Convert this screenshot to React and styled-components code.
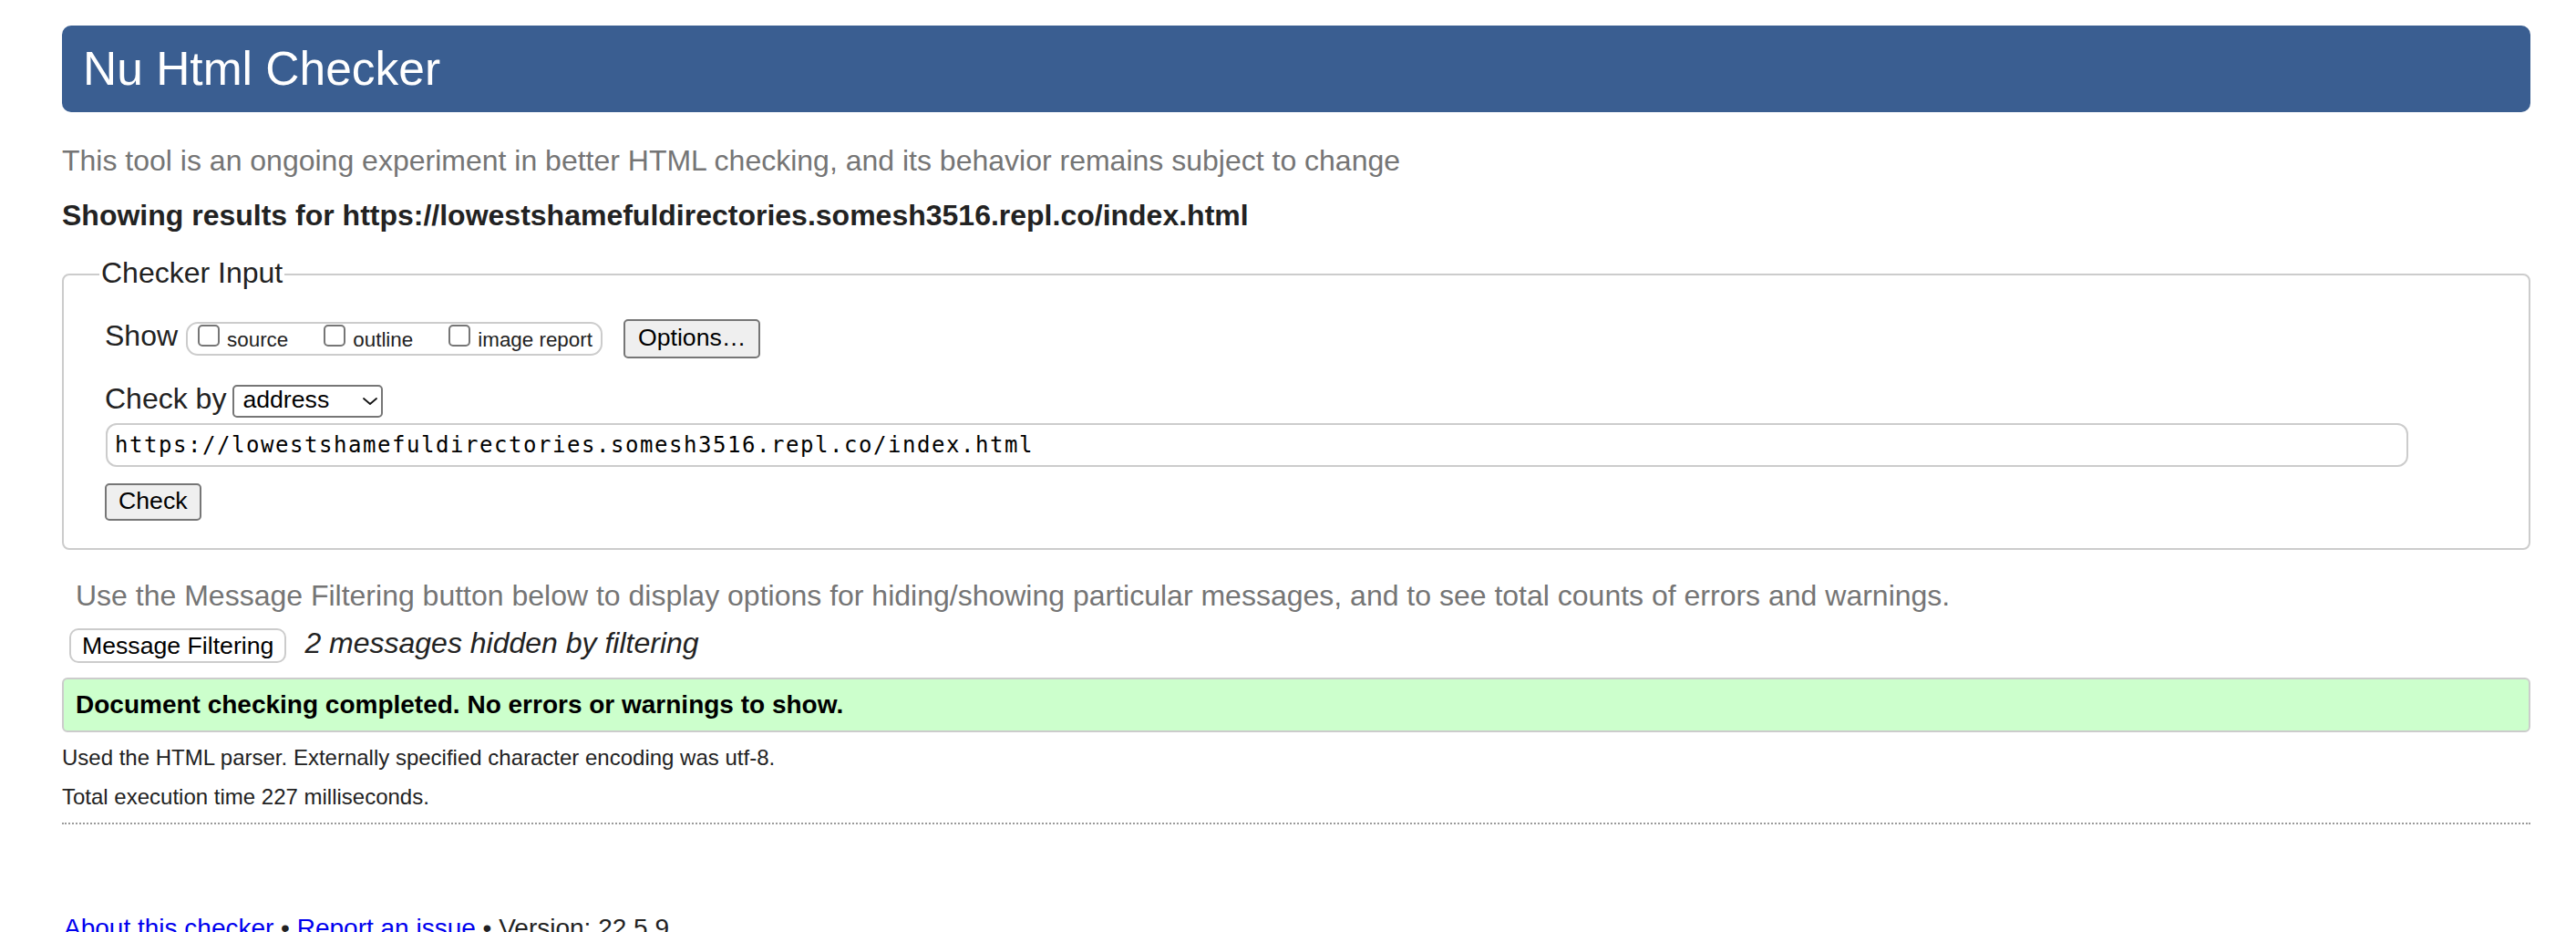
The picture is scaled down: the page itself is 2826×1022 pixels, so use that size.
import React from 'react'
import styled, { createGlobalStyle } from 'styled-components'

const GlobalStyle = createGlobalStyle`
  html, body {
    margin: 0;
    padding: 0;
    background: #fff;
  }
  body {
    font-family: 'Liberation Sans', Arial, sans-serif;
    color: #222;
  }
`

const Page = styled.div`
  padding: 28px 50px 0 68px;
`

const Header = styled.h1`
  margin: 0;
  height: 95px;
  line-height: 95px;
  padding-left: 23px;
  background: #3a5e91;
  color: #fff;
  font-size: 51.5px;
  font-weight: normal;
  border-radius: 10px;
`

const Intro = styled.p`
  margin: 33px 0 0;
  font-size: 32px;
  line-height: 40px;
  color: #757575;
`

const Results = styled.p`
  margin: 20px 0 0;
  font-size: 32px;
  line-height: 40px;
  font-weight: bold;
  color: #222;
`

const Fieldset = styled.fieldset`
  margin: 27px 0 0;
  padding: 31px 20px 30px 45px;
  min-width: 0;
  border: 2px solid #ccc;
  border-radius: 8px;
`

const Legend = styled.legend`
  margin-left: -6px;
  padding: 0 2px 4px;
  font-size: 32px;
  line-height: 32px;
  color: #222;
`

const Row = styled.div`
  display: flex;
  align-items: flex-start;
  margin-top: ${({ $gap }) => $gap || 0}px;
`

const FieldLabel = styled.span`
  font-size: 32px;
  line-height: ${({ $lh }) => $lh}px;
  margin-right: ${({ $space }) => $space}px;
  color: #222;
`

const ChoiceGroup = styled.span`
  display: flex;
  align-items: flex-start;
  box-sizing: border-box;
  height: 37px;
  margin-top: 3px;
  padding: 1px 9px 0 11px;
  border: 2px solid #ccc;
  border-radius: 13px;
`

const Choice = styled.label`
  display: flex;
  align-items: flex-start;
  & + & {
    margin-left: 39px;
  }
`

const Box = styled.span`
  display: block;
  box-sizing: border-box;
  width: 24px;
  height: 24px;
  margin-right: 8px;
  background: #fff;
  border: 2px solid #767676;
  border-radius: 5px;
`

const ChoiceText = styled.span`
  font-size: 22.4px;
  line-height: 34px;
  color: #222;
`

const Button = styled.button`
  display: block;
  margin: 0 0 0 ${({ $left }) => $left || 0}px;
  padding: ${({ $pad }) => $pad || '3px 14px 6px'};
  font-family: 'Liberation Sans', Arial, sans-serif;
  font-size: 26.67px;
  line-height: 30px;
  color: #000;
  background: #efefef;
  border: 2px solid #767676;
  border-radius: 5px;
`

const FilterButton = styled(Button)`
  padding: 2px 12px;
  margin-left: 8px;
  background: #fff;
  border-color: #ccc;
  border-radius: 10px;
`

const Select = styled.span`
  display: flex;
  align-items: center;
  justify-content: space-between;
  box-sizing: border-box;
  width: 165px;
  height: 36px;
  padding: 0 4px 3px 9px;
  border: 2px solid #767676;
  border-radius: 5px;
  font-size: 26.67px;
  color: #000;
`

const Chevron = styled.svg`
  margin-top: 3px;
`

const UrlField = styled.input`
  display: block;
  box-sizing: border-box;
  width: 2526px;
  height: 48px;
  margin: 6px 0 0 1px;
  padding: 0 8px;
  border: 2px solid #ccc;
  border-radius: 12px;
  background: #fff;
  font-family: 'DejaVu Sans Mono', 'Liberation Mono', monospace;
  font-size: 24px;
  letter-spacing: 1.55px;
  color: #000;
  outline: none;
`

const CheckWrap = styled.div`
  margin-top: 18px;
`

const FilterHint = styled.p`
  margin: 30px 0 0;
  padding-left: 15px;
  font-size: 32px;
  line-height: 40px;
  color: #757575;
`

const FilterRow = styled.div`
  display: flex;
  align-items: flex-start;
  margin-top: 16px;
`

const HiddenNote = styled.em`
  margin-left: 20px;
  font-size: 32px;
  line-height: 33px;
  color: #222;
`

const Success = styled.div`
  margin-top: 16px;
  box-sizing: border-box;
  height: 60px;
  padding-left: 13px;
  background: #ccffcc;
  border: 2px solid #ccc;
  border-radius: 6px;
  font-size: 28px;
  line-height: 56px;
  font-weight: bold;
  color: #000;
`

const Detail = styled.p`
  margin: 13px 0 0;
  font-size: 24px;
  line-height: 30px;
  color: #222;
`

const Rule = styled.hr`
  margin: 13px 0 0;
  height: 0;
  border: 0;
  border-top: 2px dotted #9a9a9a;
`

const Footer = styled.p`
  margin: 98px 0 0 2px;
  font-size: 28px;
  line-height: 32px;
  color: #222;
`

const FooterLink = styled.a`
  color: #0000ee;
  text-decoration: none;
`

const choices = ['source', 'outline', 'image report']
const url = 'https://lowestshamefuldirectories.somesh3516.repl.co/index.html'

export default function App () {
  return (
    <Page>
      <GlobalStyle />
      <Header>Nu Html Checker</Header>
      <Intro>This tool is an ongoing experiment in better HTML checking, and its behavior remains subject to change</Intro>
      <Results>Showing results for {url}</Results>

      <Fieldset>
        <Legend>Checker Input</Legend>
        <Row>
          <FieldLabel $lh={36} $space={9}>Show</FieldLabel>
          <ChoiceGroup>
            {choices.map(c => (
              <Choice key={c}>
                <Box />
                <ChoiceText>{c}</ChoiceText>
              </Choice>
            ))}
          </ChoiceGroup>
          <Button $left={23}>Options…</Button>
        </Row>
        <Row $gap={29}>
          <FieldLabel $lh={30} $space={7}>Check by</FieldLabel>
          <Select>
            <span>address</span>
            <Chevron width='16' height='8' viewBox='0 0 16 8'>
              <path d='M1 1 L8 7 L15 1' fill='none' stroke='#111' strokeWidth='1.8' strokeLinecap='round' strokeLinejoin='round' />
            </Chevron>
          </Select>
        </Row>
        <UrlField readOnly value={url} />
        <CheckWrap>
          <Button $pad='2px 13px 5px'>Check</Button>
        </CheckWrap>
      </Fieldset>

      <FilterHint>Use the Message Filtering button below to display options for hiding/showing particular messages, and to see total counts of errors and warnings.</FilterHint>
      <FilterRow>
        <FilterButton>Message Filtering</FilterButton>
        <HiddenNote>2 messages hidden by filtering</HiddenNote>
      </FilterRow>

      <Success>Document checking completed. No errors or warnings to show.</Success>
      <Detail>Used the HTML parser. Externally specified character encoding was utf-8.</Detail>
      <Detail>Total execution time 227 milliseconds.</Detail>
      <Rule />

      <Footer>
        <FooterLink href='#about'>About this checker</FooterLink>
        {' • '}
        <FooterLink href='#issue'>Report an issue</FooterLink>
        {' • Version: 22.5.9'}
      </Footer>
    </Page>
  )
}
